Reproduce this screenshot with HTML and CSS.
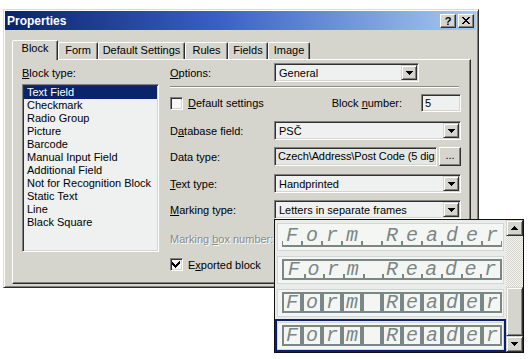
FILE: index.html
```html
<!DOCTYPE html>
<html>
<head>
<meta charset="utf-8">
<title>Properties</title>
<link rel="stylesheet" href="styles.css">
</head>
<body>
<div class="dialog">
  <div class="titlebar">
    <span class="title">Properties</span>
    <div class="tbtns">
      <span class="tbtn">?</span>
      <span class="tbtn"><svg width="8" height="7" viewBox="0 0 8 7" shape-rendering="crispEdges"><path d="M0 0h2v1h1v1h2V1h1V0h2v1H7v1H6v1H5v1h1v1h1v1h1v1H6V6H5V5H3v1H2v1H0V6h1V5h1V4h1V3H2V2H1V1H0z" fill="#000"/></svg></span>
    </div>
  </div>
  <div class="tabs">
    <div class="tab sel t-block">Block</div>
    <div class="tab t-form">Form</div>
    <div class="tab t-def">Default Settings</div>
    <div class="tab t-rules">Rules</div>
    <div class="tab t-fields">Fields</div>
    <div class="tab t-image">Image</div>
  </div>
  <div class="panel">
    <div class="leftcol">
      <div class="lbl"><u>B</u>lock type:</div>
      <ul class="list">
        <li class="selected">Text Field</li>
        <li>Checkmark</li>
        <li>Radio Group</li>
        <li>Picture</li>
        <li>Barcode</li>
        <li>Manual Input Field</li>
        <li>Additional Field</li>
        <li>Not for Recognition Block</li>
        <li>Static Text</li>
        <li>Line</li>
        <li>Black Square</li>
      </ul>
    </div>
    <div class="rightcol">
      <div class="row r-options">
        <span class="flabel"><u>O</u>ptions:</span>
        <div class="combo w-opt"><span class="val">General</span><span class="dd"><svg width="7" height="4" viewBox="0 0 7 4" shape-rendering="crispEdges"><path d="M0 0h7v1H6v1H5v1H4v1H3V3H2V2H1V1H0z"/></svg></span></div>
      </div>
      <div class="sep"></div>
      <div class="row r-def">
        <span class="check"></span>
        <span class="chklbl"><u>D</u>efault settings</span>
        <span class="bn">Block <u>n</u>umber:</span>
        <div class="edit num">5</div>
      </div>
      <div class="row r-db">
        <span class="flabel">D<u>a</u>tabase field:</span>
        <div class="combo w-full"><span class="val">PSČ</span><span class="dd"><svg width="7" height="4" viewBox="0 0 7 4" shape-rendering="crispEdges"><path d="M0 0h7v1H6v1H5v1H4v1H3V3H2V2H1V1H0z"/></svg></span></div>
      </div>
      <div class="row r-data">
        <span class="flabel">Data type:</span>
        <div class="edit ro w-data"><span class="clip">Czech\Address\Post Code (5 digi</span></div>
        <span class="btn dots">...</span>
      </div>
      <div class="row r-text">
        <span class="flabel"><u>T</u>ext type:</span>
        <div class="combo w-full"><span class="val">Handprinted</span><span class="dd"><svg width="7" height="4" viewBox="0 0 7 4" shape-rendering="crispEdges"><path d="M0 0h7v1H6v1H5v1H4v1H3V3H2V2H1V1H0z"/></svg></span></div>
      </div>
      <div class="row r-mark">
        <span class="flabel"><u>M</u>arking type:</span>
        <div class="combo w-full"><span class="val">Letters in separate frames</span><span class="dd"><svg width="7" height="4" viewBox="0 0 7 4" shape-rendering="crispEdges"><path d="M0 0h7v1H6v1H5v1H4v1H3V3H2V2H1V1H0z"/></svg></span></div>
      </div>
      <div class="row r-box">
        <span class="flabel disabled">Marking <u>b</u>ox number:</span>
      </div>
      <div class="row r-exp">
        <span class="check on"><svg width="9" height="9" viewBox="0 0 9 9" shape-rendering="crispEdges"><path d="M7 1h1v3H7v1H6v1H5v1H4v1H3V7H2V6H1V5H0V2h1v1h1v1h1v1h1V4h1V3h1V2h1z" fill="#000"/></svg></span>
        <span class="chklbl">E<u>x</u>ported block</span>
      </div>
    </div>
  </div>
</div>

<div class="popup">
  <div class="items">
    <div class="slot">
      <div class="pbox">
        <div class="sample comb"><span>F</span><span>o</span><span>r</span><span>m</span><span>&nbsp;</span><span>R</span><span>e</span><span>a</span><span>d</span><span>e</span><span>r</span></div>
      </div>
    </div>
    <div class="slot">
      <div class="pbox">
        <div class="sample frame"><span>F</span><span>o</span><span>r</span><span>m</span><span>&nbsp;</span><span>R</span><span>e</span><span>a</span><span>d</span><span>e</span><span>r</span></div>
      </div>
    </div>
    <div class="slot">
      <div class="pbox">
        <div class="sample boxes"><span>F</span><span>o</span><span>r</span><span>m</span><span>&nbsp;</span><span>R</span><span>e</span><span>a</span><span>d</span><span>e</span><span>r</span></div>
      </div>
    </div>
    <div class="slot active">
      <div class="pbox">
        <div class="sample boxes"><span>F</span><span>o</span><span>r</span><span>m</span><span>&nbsp;</span><span>R</span><span>e</span><span>a</span><span>d</span><span>e</span><span>r</span></div>
      </div>
    </div>
  </div>
  <div class="scroll">
    <span class="sbtn"><svg width="7" height="4" viewBox="0 0 7 4" shape-rendering="crispEdges"><path d="M3 0h1v1h1v1h1v1h1v1H0V3h1V2h1V1h1z"/></svg></span>
    <span class="track"></span>
    <span class="thumb"></span>
    <span class="sbtn"><svg width="7" height="4" viewBox="0 0 7 4" shape-rendering="crispEdges"><path d="M0 0h7v1H6v1H5v1H4v1H3V3H2V2H1V1H0z"/></svg></span>
  </div>
</div>
</body>
</html>
```

FILE: styles.css
```css
* { box-sizing: border-box; }
html, body { margin: 0; padding: 0; }
body {
  width: 530px;
  height: 359px;
  overflow: hidden;
  position: relative;
  background: #fff;
  font: 11px "Liberation Sans", Arial, sans-serif;
  color: #000;
}
u { text-decoration: underline; text-underline-offset: 1px; }

.dialog {
  width: 476px;
  height: 279px;
  margin: 9px 0 0 3px;
  background: #d5d5cd;
  border: 1px solid;
  border-color: #dcdcd4 #2c2c2c #2c2c2c #dcdcd4;
  box-shadow: inset 1px 1px 0 #fff, inset -1px -1px 0 #808080;
  padding: 1px 2px 2px 1px;
}

.titlebar {
  height: 19px;
  background: linear-gradient(90deg, #0a246a 0%, #3a5fc4 45%, #a6caf0 100%);
  display: flex;
  align-items: center;
  justify-content: space-between;
  padding: 0 2px 0 2px;
}
.title { color: #fff; font-weight: bold; font-size: 12px; }
.tbtns { display: flex; gap: 2px; }
.tbtn {
  width: 16px;
  height: 14px;
  background: #d5d5cd;
  border: 1px solid;
  border-color: #fff #303030 #303030 #fff;
  box-shadow: inset -1px -1px 0 #808080;
  display: flex;
  align-items: center;
  justify-content: center;
  font-weight: bold;
  font-size: 11px;
  line-height: 12px;
}

.tabs {
  display: flex;
  align-items: flex-end;
  height: 19px;
  margin: 10px 0 0 7px;
}
.tab {
  height: 17px;
  line-height: 15px;
  text-align: center;
  background: #d5d5cd;
  border: 1px solid;
  border-bottom: 0;
  border-color: #fff #2c2c2c transparent #fff;
  box-shadow: inset -1px 0 0 #808080;
  border-radius: 2px 2px 0 0;
  white-space: nowrap;
}
.tab.sel {
  height: 20px;
  line-height: 14px;
  margin-bottom: -1px;
  position: relative;
  z-index: 1;
}
.t-block { width: 46px; }
.t-form { width: 40px; }
.t-def { width: 87px; }
.t-rules { width: 43px; }
.t-fields { width: 40px; }
.t-image { width: 42px; }

.panel {
  width: 459px;
  height: 225px;
  margin-left: 7px;
  border: 1px solid;
  border-color: #fff #2c2c2c #2c2c2c #fff;
  box-shadow: inset -1px -1px 0 #808080;
  display: flex;
  gap: 11px;
  padding: 3px 8px 0 9px;
}

.leftcol { width: 137px; display: flex; flex-direction: column; }
.lbl { height: 20px; line-height: 20px; margin-bottom: 1px; }
.list {
  list-style: none;
  margin: 0;
  height: 168px;
  background: #eef1ef;
  border: 1px solid;
  border-color: #808080 #fff #fff #808080;
  box-shadow: inset 1px 1px 0 #303030, inset -1px -1px 0 #d5d5cd;
  padding: 1px;
}
.list li { height: 13px; line-height: 13px; padding-left: 3px; white-space: nowrap; }
.list li.selected { background: #0a246a; color: #fff; }

.rightcol { width: 291px; display: flex; flex-direction: column; }
.row { display: flex; align-items: center; height: 19px; }
.flabel { width: 104px; flex: none; white-space: nowrap; }
.disabled { color: #8a8a84; text-shadow: 1px 1px 0 #fff; }

.sep {
  width: 289px;
  height: 2px;
  margin-top: 4px;
  border-top: 1px solid #8a8a84;
  border-bottom: 1px solid #fff;
}
.r-def { height: 18px; margin-top: 6px; }
.r-db { margin-top: 9px; }
.r-data { margin-top: 7px; }
.r-text { margin-top: 8px; }
.r-mark { margin-top: 7px; }
.r-box { margin-top: 10px; }
.r-exp { margin-top: 7px; }

.combo {
  height: 19px;
  background: #eef1ef;
  border: 1px solid;
  border-color: #808080 #fff #fff #808080;
  box-shadow: inset 1px 1px 0 #303030, inset -1px -1px 0 #d5d5cd;
  display: flex;
  align-items: center;
  padding: 1px 1px 1px 4px;
}
.combo .val { flex: 1; white-space: nowrap; overflow: hidden; }
.w-opt { width: 145px; }
.w-full { width: 187px; }
.dd {
  width: 16px;
  height: 15px;
  flex: none;
  background: #d5d5cd;
  border: 1px solid;
  border-color: #d5d5cd #303030 #303030 #d5d5cd;
  box-shadow: inset 1px 1px 0 #fff, inset -1px -1px 0 #808080;
  display: flex;
  align-items: center;
  justify-content: center;
}

.edit {
  height: 19px;
  line-height: 15px;
  background: #eef1ef;
  border: 1px solid;
  border-color: #808080 #fff #fff #808080;
  box-shadow: inset 1px 1px 0 #303030, inset -1px -1px 0 #d5d5cd;
  padding: 1px 2px 1px 4px;
  white-space: nowrap;
  overflow: hidden;
}
.num { width: 40px; height: 18px; padding-left: 3px; margin-left: 19px; }
.ro { background: #e4e7e3; padding: 1px 1px 1px 3px; }
.clip { display: block; overflow: hidden; white-space: nowrap; letter-spacing: -0.1px; }
.w-data { width: 164px; }
.btn {
  width: 22px;
  height: 19px;
  margin-left: 2px;
  background: #d5d5cd;
  border: 1px solid;
  border-color: #fff #303030 #303030 #fff;
  box-shadow: inset -1px -1px 0 #808080;
  text-align: center;
  line-height: 14px;
}

.check {
  width: 13px;
  height: 13px;
  flex: none;
  background: #f6f7f6;
  border: 1px solid;
  border-color: #808080 #fff #fff #808080;
  box-shadow: inset 1px 1px 0 #303030, inset -1px -1px 0 #d5d5cd;
  display: flex;
  align-items: center;
  justify-content: center;
}
.chklbl { margin-left: 5px; white-space: nowrap; }
.bn { margin-left: auto; white-space: nowrap; }

/* dropdown list (overlays the dialog) */
.popup {
  position: absolute;
  left: 274px;
  top: 219px;
  width: 250px;
  height: 134px;
  border: 1px solid #101010;
  background: #e9ecea;
  display: flex;
}
.items { flex: 1; display: flex; flex-direction: column; }
.slot { height: 33px; padding: 3px 2px 2px 2px; }
.slot.active { border: 2px solid #0a1f6e; padding: 1px 0 0 0; }
.pbox {
  height: 28px;
  background: #f4f6f4;
  border: 1px solid #d3d7d3;
  padding: 2px 0 0 4px;
}
.sample {
  display: flex;
  width: 220px;
  height: 21px;
  font: italic 20px "Liberation Mono", "Courier New", monospace;
  color: #7b8686;
}
.sample span { width: 20px; text-align: center; line-height: 19px; flex: none; }
.comb { border-bottom: 2px solid #7b8686; }
.comb span {
  background:
    linear-gradient(#7b8686, #7b8686) left bottom / 1px 4px no-repeat,
    linear-gradient(#7b8686, #7b8686) right bottom / 1px 4px no-repeat;
}
.frame { border: 2px solid #7b8686; }
.frame span { flex: 1; width: auto; line-height: 17px; }
.frame span + span {
  background: linear-gradient(#7b8686, #7b8686) left bottom / 2px 4px no-repeat;
}
.boxes span { border: 2px solid #7b8686; line-height: 17px; }

.scroll { width: 17px; display: flex; flex-direction: column; }
.sbtn {
  height: 16px;
  background: #d5d5cd;
  border: 1px solid;
  border-color: #d5d5cd #303030 #303030 #d5d5cd;
  box-shadow: inset 1px 1px 0 #fff, inset -1px -1px 0 #808080;
  display: flex;
  align-items: center;
  justify-content: center;
}
.track {
  height: 51px;
  background: repeating-conic-gradient(#f4f4f0 0 25%, #d5d5cd 0 50%) 0 0 / 2px 2px;
}
.thumb {
  height: 49px;
  background: #d5d5cd;
  border: 1px solid;
  border-color: #d5d5cd #303030 #303030 #d5d5cd;
  box-shadow: inset 1px 1px 0 #fff, inset -1px -1px 0 #808080;
}
```
